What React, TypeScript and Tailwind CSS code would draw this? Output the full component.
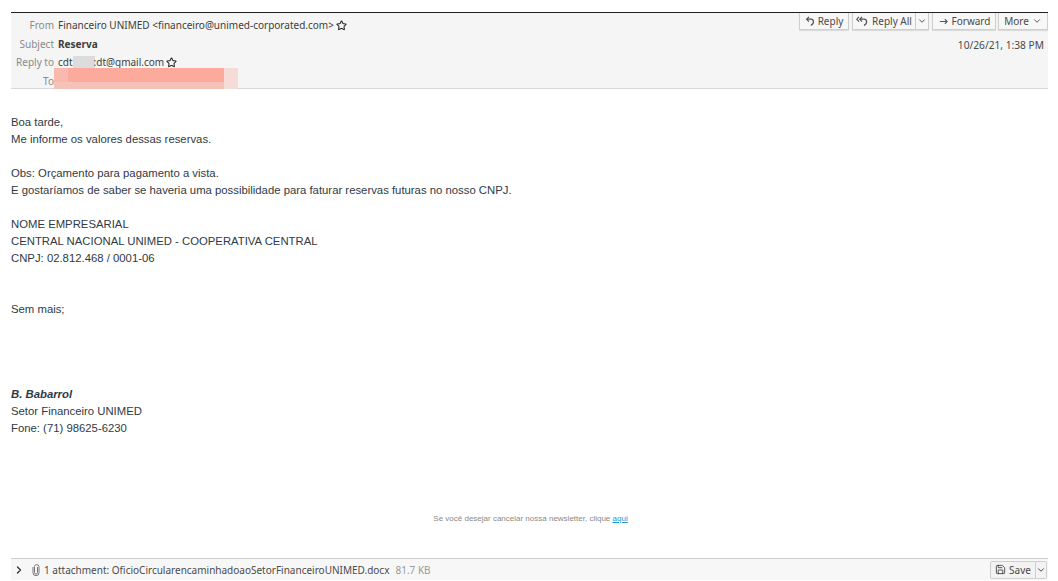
import { ChevronDown, ChevronRight, Save, Star } from 'lucide-react';
import type { ReactNode } from 'react';

const uiFont = "font-['Noto_Sans',sans-serif]";

function HeaderRow({ label, children }: { label: string; children: ReactNode }) {
  return (
    <div className="flex items-center h-[18.5px]">
      <span className="w-[43px] text-right text-[#8a8a8a] shrink-0">{label}</span>
      <div className="ml-[4px] flex items-center text-[#3d3d3d]">{children}</div>
    </div>
  );
}

function ToolbarButton({ children, className = '' }: { children: ReactNode; className?: string }) {
  return (
    <div className={`h-[17px] flex items-center justify-center gap-[3px] bg-[#f7f7f7] border border-[#cfcfcf] border-t-0 rounded-b-[1px] shadow-[0_1px_1px_rgba(0,0,0,0.12)] text-[#4a4a4a] ${className}`}>
      {children}
    </div>
  );
}

function ReplyIcon() {
  return (
    <svg width="10" height="11" viewBox="0 0 10 11" fill="none" stroke="#555" strokeWidth="1.2">
      <path d="M4 .8 1.6 3.2 4 5.6M1.6 3.2h4.2a2.6 2.6 0 0 1 2.6 2.6c0 1.8-1 3-2.6 3.6" />
    </svg>
  );
}

function ReplyAllIcon() {
  return (
    <svg width="13" height="11" viewBox="0 0 13 11" fill="none" stroke="#555" strokeWidth="1.2">
      <path d="M3 .8 .8 3.2 3 5.6M6 .8 3.8 3.2 6 5.6M3.8 3.2h4.2a2.6 2.6 0 0 1 2.6 2.6c0 1.8-1 3-2.6 3.6" />
    </svg>
  );
}

function ForwardIcon() {
  return (
    <svg width="11" height="11" viewBox="0 0 12 12" fill="none" stroke="#555" strokeWidth="1.2">
      <path d="M7.5 3.5 10 6 7.5 8.5M10 6H2" />
    </svg>
  );
}

function ClipIcon() {
  return (
    <svg width="8" height="12" viewBox="0 0 8 12" fill="none" stroke="#777" strokeWidth="1">
      <path d="M5.5 3v5.5a1.5 1.5 0 0 1-3 0V2.5a2 2 0 0 1 2-1.8 2.2 2.2 0 0 1 2.5 2v6a3 3 0 0 1-6 0V3" />
    </svg>
  );
}

export default function App() {
  return (
    <div className={`h-[581px] w-[1058px] bg-white flex flex-col pt-[12px] pb-px pl-[11px] pr-[10px] overflow-hidden ${uiFont}`}>
      <header className="relative h-[77px] shrink-0 bg-[#f5f5f5] border-t border-t-[#222] border-b border-b-[#d8d8d8] text-[10px] leading-none flex justify-between">
        <div className="pt-[3px]">
          <HeaderRow label="From">
            <span>Financeiro UNIMED &lt;financeiro@unimed-corporated.com&gt;</span>
            <Star className="w-[11px] h-[11px] ml-[2px] text-[#222]" strokeWidth={2.2} />
          </HeaderRow>
          <HeaderRow label="Subject">
            <span className="font-bold">Reserva</span>
          </HeaderRow>
          <HeaderRow label="Reply to">
            <span>cdt</span>
            <span className="w-[22px] h-[12px] bg-[#dcdcdc] -mr-[1px]" />
            <span>:dt@gmail.com</span>
            <Star className="w-[11px] h-[11px] ml-[2px] text-[#222]" strokeWidth={2.2} />
          </HeaderRow>
          <HeaderRow label="To">
            <span />
          </HeaderRow>
        </div>
        <div className="absolute left-[43px] top-[55px] h-[21px] w-[184px] bg-[#f6dcd8]">
          <div className="h-[14px] w-[170px] bg-[#fcaa9b] border-l-[14px] border-l-[#f9b9ac]" />
          <div className="h-[7px] w-[170px] bg-[#f5c2b9]" />
        </div>
        <div className="flex flex-col items-end">
          <div className="flex gap-[3px]">
            <ToolbarButton className="w-[50px]"><ReplyIcon />Reply</ToolbarButton>
            <div className="flex">
              <ToolbarButton className="w-[64px]"><ReplyAllIcon />Reply All</ToolbarButton>
              <ToolbarButton className="w-[13px] border-l-0"><ChevronDown className="w-[10px] h-[10px]" strokeWidth={2.2} /></ToolbarButton>
            </div>
            <ToolbarButton className="w-[64px]"><ForwardIcon />Forward</ToolbarButton>
            <ToolbarButton className="w-[50px] -ml-px">More<ChevronDown className="w-[10px] h-[10px]" strokeWidth={2.2} /></ToolbarButton>
          </div>
          <div className="mt-[10px] mr-[4px] text-[10.2px] text-[#4a4a4a]">10/26/21, 1:38 PM</div>
        </div>
      </header>

      <main className="flex-1 min-h-0 font-['Liberation_Sans',sans-serif] text-[11.33px] leading-[17px] text-[#2f3a45] pt-[25px]">
        <p>Boa tarde,</p>
        <p>Me informe os valores dessas reservas.</p>
        <p className="mt-[17px]">Obs: Orçamento para pagamento a vista.</p>
        <p>E gostaríamos de saber se haveria uma possibilidade para faturar reservas futuras no nosso CNPJ.</p>
        <p className="mt-[17px]">NOME EMPRESARIAL</p>
        <p>CENTRAL NACIONAL UNIMED - COOPERATIVA CENTRAL</p>
        <p>CNPJ: 02.812.468 / 0001-06</p>
        <p className="mt-[34px]">Sem mais;</p>
        <p className="mt-[68px] font-bold italic">B. Babarrol</p>
        <p>Setor Financeiro UNIMED</p>
        <p>Fone: (71) 98625-6230</p>
        <p className="mt-[77px] pl-[2px] text-center text-[8px] leading-[10px] text-[#8a8a8a]">
          Se você desejar cancelar nossa newsletter, clique{' '}
          <span className="text-[#1a9bd7] underline">aqui</span>
        </p>
      </main>

      <footer className="h-[22px] shrink-0 bg-[#f7f7f7] border-t border-t-[#cfcfcf] flex items-center text-[10px] leading-none text-[#4a4a4a]">
        <ChevronRight className="w-[12px] h-[12px] ml-[2px] text-[#333]" strokeWidth={2.6} />
        <span className="ml-[7px] flex"><ClipIcon /></span>
        <span className="ml-[4px]">1 attachment: OficioCircularencaminhadoaoSetorFinanceiroUNIMED.docx</span>
        <span className="ml-[6px] text-[#9a9a9a]">81.7 KB</span>
        <div className="ml-auto flex mr-px">
          <div className="h-[18px] w-[46px] flex items-center justify-center gap-[3px] border border-[#cfcfcf] bg-[#f3f3f3] rounded-l-[2px]">
            <Save className="w-[11px] h-[11px] text-[#333]" strokeWidth={1.8} />
            Save
          </div>
          <div className="h-[18px] w-[11px] flex items-center justify-center border border-l-0 border-[#cfcfcf] bg-[#f3f3f3] rounded-r-[2px]">
            <ChevronDown className="w-[10px] h-[10px]" strokeWidth={2.4} />
          </div>
        </div>
      </footer>
    </div>
  );
}
